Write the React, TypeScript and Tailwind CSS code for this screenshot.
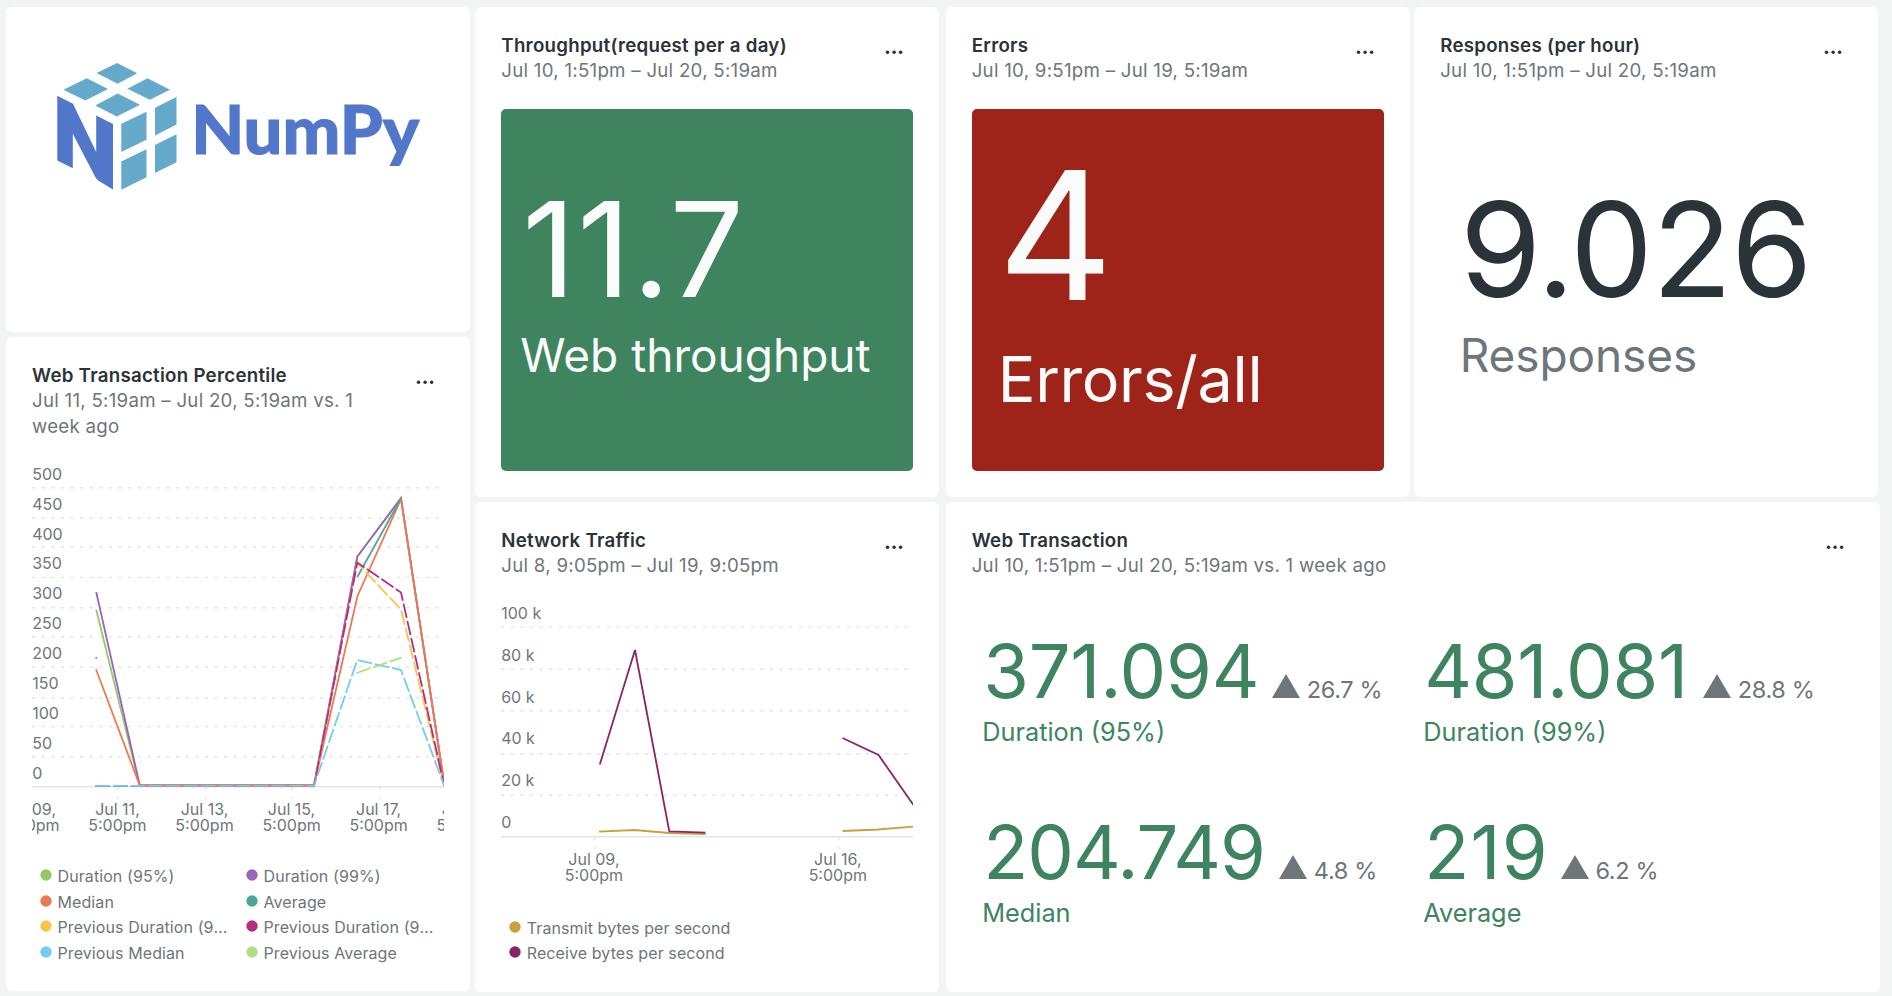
import React from "react";
import clsx from "clsx";

type Point = [number, number];

interface Series {
  color: string;
  points: Point[];
  dashed?: boolean;
  width?: number;
}

const toPath = (points: Point[]) => points.map(([x, y]) => `${x},${y}`).join(" ");

function Card({ className, children }: { className: string; children: React.ReactNode }) {
  return (
    <section className={clsx("flex shrink-0 flex-col rounded-[6px] bg-white px-[26px] pt-[25.5px]", className)}>
      {children}
    </section>
  );
}

function Header({ title, range, wrap }: { title: string; range: string; wrap?: boolean }) {
  return (
    <header className="flex shrink-0 items-start justify-between">
      <div className={wrap ? "w-[340px]" : undefined}>
        <h2 className="text-[18.7px] leading-[25px] font-semibold tracking-[0.27px] text-[#2a3337]">{title}</h2>
        <p className="text-[18.7px] leading-[26px] tracking-[0.26px] text-[#6d767b]">{range}</p>
      </div>
      <svg className="mt-[16px] mr-[10px] shrink-0" width="18" height="7" viewBox="0 0 18 7" fill="#2a3337">
        <circle cx="2.5" cy="3.3" r="1.75" />
        <circle cx="9.1" cy="3.3" r="1.75" />
        <circle cx="15.6" cy="3.3" r="1.75" />
      </svg>
    </header>
  );
}

function Logo() {
  return (
    <svg className="block" width="412" height="170" viewBox="32 32.5 412 170">
      <g fill="#65a9cb">
        <path d="M117 62.5 137.2 72.8 117.6 83.2 96.6 72.6Z" />
        <path d="M86.8 77.7 108 88.5 85.3 100 63.5 89.3Z" />
        <path d="M147.5 77.7 170 89.3 149.8 99.2 127.4 88.3Z" />
        <path d="M117.6 93 140 104.3 116.8 116 95.3 105Z" />
        <path d="M121.3 123.3 146.5 111.2V139.2L121.3 151.6Z" />
        <path d="M155 107.2 176.5 96.5V124L155 135Z" />
        <path d="M121.3 161 146.5 148.8V176.7L121.3 189.3Z" />
        <path d="M155 144.6 176.5 133.8V161.8L155 172.6Z" />
      </g>
      <path
        fill="#5277ca"
        d="M57.3 95.2 73 103.2 96.2 151.5V115L113 123.5V189L98.5 180.2Q96.5 178.9 95.3 176.5L72.8 133.3V167.8L57.3 160Z"
      />
      <text
        x="191.2"
        y="153.9"
        fill="#5277ca"
        stroke="#5277ca"
        strokeWidth="1"
        fontSize="67.5"
        fontWeight="900"
        textLength="228"
        lengthAdjust="spacingAndGlyphs"
        className="font-[Lato,sans-serif]"
      >
        NumPy
      </text>
    </svg>
  );
}

function Billboard({
  value,
  label,
  className,
  valueClass,
  labelClass,
}: {
  value: string;
  label: string;
  className: string;
  valueClass: string;
  labelClass: string;
}) {
  return (
    <div className={clsx("mt-[25.5px] flex h-[362px] flex-col rounded-[5px]", className)}>
      <div className={clsx("leading-none", valueClass)}>{value}</div>
      <div className={clsx("leading-none", labelClass)}>{label}</div>
    </div>
  );
}

interface ChartProps {
  left: number;
  top: number;
  height: number;
  yLabels: { text: string; y: number }[];
  grid: number[];
  axis: number;
  ticks: number[];
  xLabels: { text: string; x: number }[];
  xBase: number;
  series: Series[];
  gridEnd: number;
  className: string;
}

function LineChart(p: ChartProps) {
  return (
    <svg
      className={clsx("block shrink-0 overflow-hidden", p.className)}
      width="412"
      height={p.height}
      viewBox={`${p.left} ${p.top} 412 ${p.height}`}
    >
      {p.grid.map((y) => (
        <line key={y} x1={p.left} x2={p.gridEnd} y1={y} y2={y} stroke="#e3e5e5" strokeWidth="1.4" strokeDasharray="3.3 6.3" />
      ))}
      <line x1={p.left} x2={p.left + 412} y1={p.axis} y2={p.axis} stroke="#e3e5e5" strokeWidth="1.4" />
      {p.ticks.map((x) => (
        <line key={x} x1={x} x2={x} y1={p.axis} y2={p.axis + 12.5} stroke="#e3e5e5" strokeWidth="1.3" strokeDasharray="3.3 6.3" />
      ))}
      <g fill="#6d767b" fontSize="16">
        {p.yLabels.map((l) => (
          <text key={l.text} x={p.left + 0.2} y={l.y}>
            {l.text}
          </text>
        ))}
        <g textAnchor="middle">
          {p.xLabels.map((l) => (
            <g key={l.text}>
              <text x={l.x} y={p.xBase}>
                {l.text}
              </text>
              <text x={l.x} y={p.xBase + 16}>
                5:00pm
              </text>
            </g>
          ))}
        </g>
      </g>
      {p.series.map((s, i) => (
        <polyline
          key={i}
          points={toPath(s.points)}
          fill="none"
          stroke={s.color}
          strokeWidth={s.width ?? 1.8}
          strokeDasharray={s.dashed ? "14.6 3" : undefined}
        />
      ))}
    </svg>
  );
}

function Legend({
  items,
  className,
  labelClass,
}: {
  items: { label: string; color: string }[];
  className: string;
  labelClass?: string;
}) {
  return (
    <ul className={clsx("grid pl-[8px]", className)}>
      {items.map((it) => (
        <li key={it.label} className="flex h-[25.6px] items-start">
          <svg className="shrink-0" width="12" height="12" viewBox="0 0 12 12">
            <circle cx="6" cy="6" r="5.7" fill={it.color} />
          </svg>
          <span className={clsx("ml-[5.5px] text-[16px] leading-[14px] tracking-[0.09px] text-[#6d767b]", labelClass)}>
            {it.label}
          </span>
        </li>
      ))}
    </ul>
  );
}

const percentileSeries: Series[] = [
  { color: "#96c765", points: [[96.2, 609.5], [139.6, 785.5], [314, 785.5], [357.3, 556.8], [401, 498.4], [444.5, 786]] },
  { color: "#9a63bd", points: [[96.2, 592], [139.8, 785.5], [314, 785.5], [357.3, 556.5], [401, 498], [444.5, 786]] },
  { color: "#ea7a52", points: [[96, 669.3], [139.6, 785.2], [314, 785.2], [357.5, 596], [401, 499], [444.5, 786]] },
  { color: "#4fa696", points: [[357.3, 577], [401, 498.5]] },
  { color: "#4fa696", points: [[95.4, 657.8], [97.2, 657.8]] },
  { color: "#f6c54c", dashed: true, points: [[95.5, 785.8], [314, 785.8], [357.3, 563], [401, 609.5], [444.3, 786]] },
  { color: "#b52d81", dashed: true, points: [[95.5, 785.8], [314, 785.8], [357.3, 562.5], [401, 592.5], [444.3, 786]] },
  { color: "#72cdec", dashed: true, points: [[95.5, 785.8], [314, 785.8], [357.3, 660], [401, 670], [444.3, 786]] },
  { color: "#b0de83", dashed: true, points: [[356.5, 673], [401.5, 657.6]] },
];

const networkSeries: Series[] = [
  { color: "#c9a03c", points: [[599, 831.7], [634.5, 830], [669, 833], [705.5, 834]] },
  { color: "#c9a03c", points: [[842.5, 831], [878, 829.5], [913.5, 826.6]] },
  { color: "#8a2565", points: [[599.8, 764.5], [635, 650], [669.3, 831.3], [705.5, 832.6]] },
  { color: "#8a2565", points: [[842.5, 738], [878.5, 755], [913.5, 805]] },
];

function Metric({ value, delta, label, valueClass }: { value: string; delta: string; label: string; valueClass: string }) {
  return (
    <div className="h-[181px]">
      <div className="flex h-[74px] items-baseline pl-[1px]">
        <span className={clsx("text-[74px] leading-[74px] text-[#3d845f]", valueClass)}>{value}</span>
        <svg className="ml-[13px] shrink-0" width="28" height="24" viewBox="0 0 28 24">
          <path d="M14 0 28 24H0Z" fill="#6d767b" />
        </svg>
        <span className="ml-[6.5px] text-[23.5px] leading-[24px] tracking-[-0.35px] text-[#6d767b]">{delta}</span>
      </div>
      <div className="mt-[8.5px] text-[25.3px] leading-[30px] text-[#3d845f]">{label}</div>
    </div>
  );
}

export default function App() {
  return (
    <main className="flex h-[996px] w-[1892px] overflow-hidden bg-[#f3f5f4] pt-[7px] pl-[6px] font-[Inter,sans-serif]">
      <div className="flex w-[464.3px] shrink-0 flex-col gap-[5px]">
        <Card className="h-[325px]">
          <Logo />
        </Card>
        <Card className="h-[654px]">
          <Header title="Web Transaction Percentile" range="Jul 11, 5:19am – Jul 20, 5:19am vs. 1 week ago" wrap />
          <LineChart
            className="mt-[15.5px]"
            left={32}
            top={455}
            height={395}
            gridEnd={445}
            yLabels={[500, 450, 400, 350, 300, 250, 200, 150, 100, 50, 0].map((v, i) => ({ text: String(v), y: 479.8 + i * 29.87 }))}
            grid={[487.7, 518.3, 547, 577.4, 607.7, 636.7, 667, 697.7, 726.5, 756.7]}
            axis={786.8}
            ticks={[117.7, 205.5, 291.8, 379.8]}
            xLabels={["Jul 09,", "Jul 11,", "Jul 13,", "Jul 15,", "Jul 17,", "Jul 19,"].map((text, i) => ({ text, x: 30.4 + i * 87.05 }))}
            xBase={815}
            series={percentileSeries}
          />
          <Legend
            className="mt-[19px] grid-cols-[206px_206px]"
            labelClass="w-[174px] truncate [overflow-x:clip] [overflow-y:visible]"
            items={[
              { label: "Duration (95%)", color: "#96c765" },
              { label: "Duration (99%)", color: "#9a63bd" },
              { label: "Median", color: "#ea7a52" },
              { label: "Average", color: "#4fa696" },
              { label: "Previous Duration (95%)", color: "#f6c54c" },
              { label: "Previous Duration (99%)", color: "#b52d81" },
              { label: "Previous Median", color: "#72cdec" },
              { label: "Previous Average", color: "#b0de83" },
            ]}
          />
        </Card>
      </div>

      <div className="ml-[5px] flex w-[464px] shrink-0 flex-col gap-[5px]">
        <Card className="h-[490px]">
          <Header title="Throughput(request per a day)" range="Jul 10, 1:51pm – Jul 20, 5:19am" />
          <Billboard
            value="11.7"
            label="Web throughput"
            className="bg-[#3d845f] pt-[74.5px] pl-[19px] text-[#fafcfb]"
            valueClass="pl-[2px] text-[131.6px] tracking-[1.4px]"
            labelClass="mt-[17.4px] text-[46px]"
          />
        </Card>
        <Card className="h-[490px]">
          <Header title="Network Traffic" range="Jul 8, 9:05pm – Jul 19, 9:05pm" />
          <LineChart
            className="mt-[21.5px]"
            left={501}
            top={600}
            height={290}
            gridEnd={908}
            yLabels={["100 k", "80 k", "60 k", "40 k", "20 k", "0"].map((text, i) => ({ text, y: 618.8 + i * 41.85 }))}
            grid={[627.4, 669.2, 710.7, 753.7, 795.2]}
            axis={836.8}
            ticks={[594.7, 838.8]}
            xLabels={[
              { text: "Jul 09,", x: 593.9 },
              { text: "Jul 16,", x: 837.8 },
            ]}
            xBase={865.3}
            series={networkSeries}
          />
          <Legend
            className="mt-[30.5px] grid-cols-1"
            labelClass="whitespace-nowrap"
            items={[
              { label: "Transmit bytes per second", color: "#c9a03c" },
              { label: "Receive bytes per second", color: "#8a2565" },
            ]}
          />
        </Card>
      </div>

      <div className="ml-[6.4px] flex w-[934px] shrink-0 flex-col gap-[5px]">
        <div className="flex gap-[4.5px]">
          <Card className="h-[490px] w-[464px]">
            <Header title="Errors" range="Jul 10, 9:51pm – Jul 19, 5:19am" />
            <Billboard
              value="4"
              label="Errors/all"
              className="bg-[#9e2419] pt-[37px] pl-[26px] text-[#fafcfb]"
              valueClass="text-[179px]"
              labelClass="mt-[22.5px] text-[62.8px] tracking-[-0.3px]"
            />
          </Card>
          <Card className="h-[490px] w-[464px]">
            <Header title="Responses (per hour)" range="Jul 10, 1:51pm – Jul 20, 5:19am" />
            <Billboard
              value="9.026"
              label="Responses"
              className="pt-[74.5px] pl-[19.5px]"
              valueClass="text-[131.6px] tracking-[-1.2px] text-[#2a3337]"
              labelClass="mt-[17.4px] text-[46px] tracking-[-0.1px] text-[#6d767b]"
            />
          </Card>
        </div>
        <Card className="h-[490px]">
          <Header title="Web Transaction" range="Jul 10, 1:51pm – Jul 20, 5:19am vs. 1 week ago" />
          <div className="mt-[55.5px] grid grid-cols-[441px_430px] pl-[10.5px]">
            <Metric value="371.094" delta="26.7 %" label="Duration (95%)" valueClass="tracking-[-0.2px]" />
            <Metric value="481.081" delta="28.8 %" label="Duration (99%)" valueClass="mr-[2.5px] tracking-[-0.3px]" />
            <Metric value="204.749" delta="4.8 %" label="Median" valueClass="mr-[1.5px] tracking-[-1px]" />
            <Metric value="219" delta="6.2 %" label="Average" valueClass="-mr-[1px] tracking-[1.2px]" />
          </div>
        </Card>
      </div>
    </main>
  );
}
